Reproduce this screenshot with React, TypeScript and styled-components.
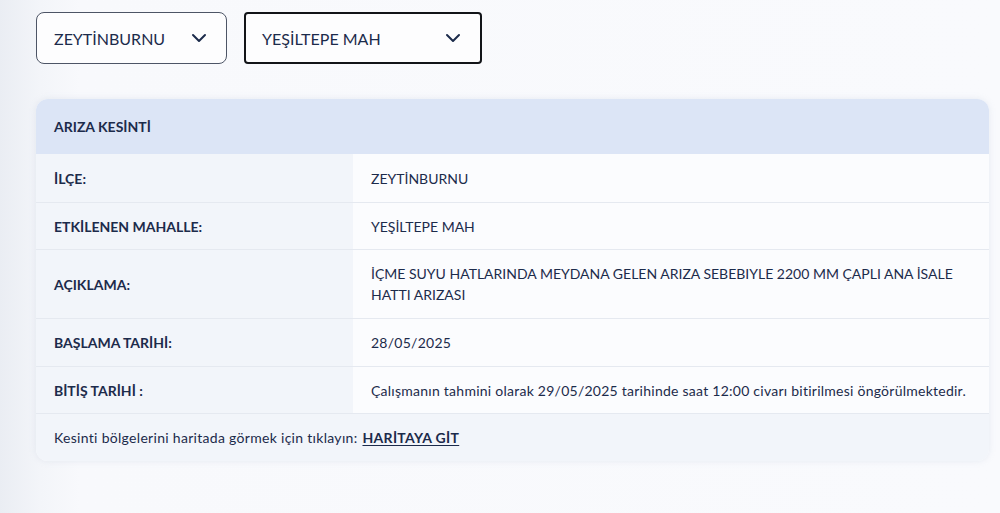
import styled, { createGlobalStyle } from 'styled-components';

const GlobalStyle = createGlobalStyle`
  html, body {
    margin: 0;
    padding: 0;
  }
  body {
    font-family: 'Lato', 'Noto Sans', sans-serif;
    color: #1c2b4b;
    background: linear-gradient(to right, #eaedf3 0, #f3f5f9 40px, #f8f9fc 80px, #f9fafd 100%);
    min-height: 513px;
  }
`;

const Page = styled.div`
  padding: 12px 11px 40px 36px;
  display: flex;
  flex-direction: column;
  gap: 35px;
`;

const Filters = styled.div`
  display: flex;
  gap: 17px;
`;

const Select = styled.div<{ $active?: boolean; $width: number }>`
  box-sizing: border-box;
  width: ${(p) => p.$width}px;
  height: 52px;
  display: flex;
  align-items: center;
  justify-content: space-between;
  padding: 0 19px 0 ${(p) => (p.$active ? 16 : 17)}px;
  background: #fdfdfe;
  border: ${(p) => (p.$active ? '2px solid #121418' : '1px solid #4d5566')};
  border-radius: ${(p) => (p.$active ? 4 : 8)}px;
  font-size: 16px;
  color: #1c2b4b;
  cursor: pointer;
`;

const Chevron = () => (
  <svg width="16" height="10" viewBox="0 0 16 10" fill="none">
    <path d="M2 2l6 6 6-6" stroke="#1c2b4b" strokeWidth="2" strokeLinecap="round" strokeLinejoin="round" />
  </svg>
);

const Card = styled.div`
  width: 953px;
  border-radius: 12px;
  overflow: hidden;
  background: #fbfcfe;
  box-shadow: 0 0 6px rgba(180, 190, 210, 0.25);
`;

const CardHead = styled.div`
  height: 55px;
  display: flex;
  align-items: center;
  padding: 0 18px;
  background: #dce5f6;
  font-size: 14px;
  font-weight: 700;
  color: #1c2b4b;
`;

const Row = styled.div<{ $h: number }>`
  box-sizing: border-box;
  display: grid;
  grid-template-columns: 317px 1fr;
  min-height: ${(p) => p.$h}px;
  border-bottom: 1px solid #e5e9f0;
`;

const Label = styled.div`
  display: flex;
  align-items: center;
  padding: 0 18px;
  background: #f2f5fa;
  font-size: 14px;
  font-weight: 700;
`;

const Value = styled.div<{ $spaced?: boolean }>`
  display: flex;
  align-items: center;
  padding: 0 18px;
  background: #fbfcfe;
  font-size: 14px;
  line-height: 21px;
  letter-spacing: ${(p) => (p.$spaced ? '0.25px' : '0')};
`;

const Footer = styled.div`
  height: 47px;
  display: flex;
  align-items: center;
  padding: 0 18px;
  background: #f2f5fa;
  font-size: 14px;
  letter-spacing: 0.3px;
`;

const MapLink = styled.a`
  margin-left: 5px;
  font-weight: 700;
  color: #1c2b4b;
  text-decoration: underline;
  text-underline-offset: 2px;
`;

const rows = [
  { label: 'İLÇE:', value: 'ZEYTİNBURNU', h: 49 },
  { label: 'ETKİLENEN MAHALLE:', value: 'YEŞİLTEPE MAH', h: 47 },
  {
    label: 'AÇIKLAMA:',
    value: 'İÇME SUYU HATLARINDA MEYDANA GELEN ARIZA SEBEBIYLE 2200 MM ÇAPLI ANA İSALE HATTI ARIZASI',
    h: 69,
  },
  { label: 'BAŞLAMA TARİHİ:', value: '28/05/2025', h: 48, spaced: true },
  {
    label: 'BİTİŞ TARİHİ :',
    value: 'Çalışmanın tahmini olarak 29/05/2025 tarihinde saat 12:00 civarı bitirilmesi öngörülmektedir.',
    h: 47,
    spaced: true,
  },
];

export default function App() {
  return (
    <>
      <GlobalStyle />
      <Page>
        <Filters>
          <Select $width={191}>
            ZEYTİNBURNU
            <Chevron />
          </Select>
          <Select $width={238} $active>
            YEŞİLTEPE MAH
            <Chevron />
          </Select>
        </Filters>
        <Card>
          <CardHead>ARIZA KESİNTİ</CardHead>
          <div>
            {rows.map((r) => (
              <Row key={r.label} $h={r.h}>
                <Label>{r.label}</Label>
                <Value $spaced={r.spaced}>{r.value}</Value>
              </Row>
            ))}
          </div>
          <Footer>
            Kesinti bölgelerini haritada görmek için tıklayın:
            <MapLink href="#">HARİTAYA GİT</MapLink>
          </Footer>
        </Card>
      </Page>
    </>
  );
}
